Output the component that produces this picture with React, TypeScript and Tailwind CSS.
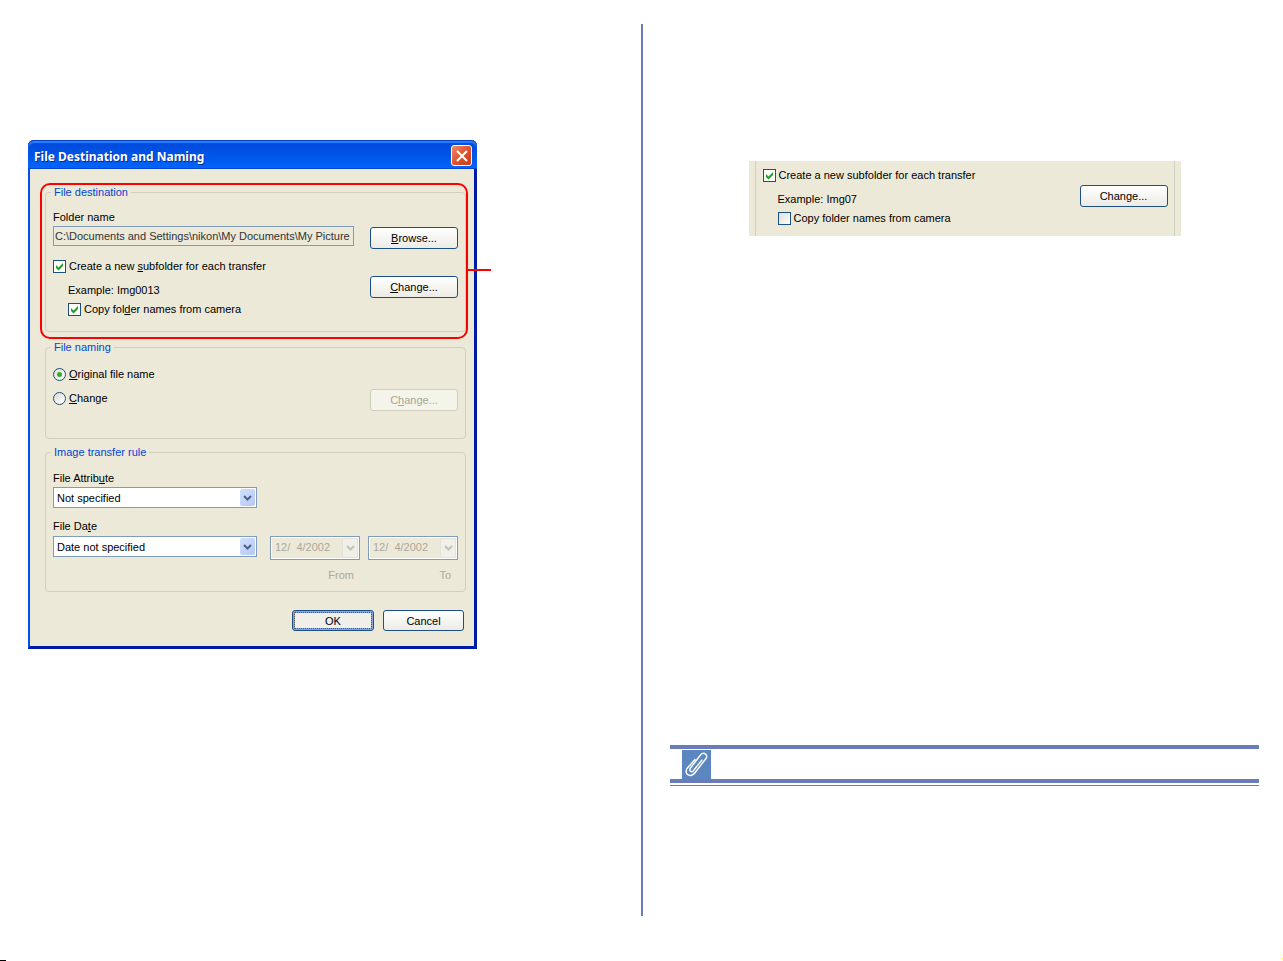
import React from "react";

const uiFont = "font-['Liberation_Sans',Arial,sans-serif]";

function CheckMark() {
  return (
    <svg viewBox="0 0 13 13" className="pointer-events-none absolute inset-0 size-[13px]" aria-hidden="true">
      <path d="M3 5v3l2.500 2.500L10 6V3L5.500 7.500Z" fill="#21a121" />
    </svg>
  );
}

function Check({ checked = false, children }: { checked?: boolean; children: React.ReactNode }) {
  return (
    <label className="flex h-4 items-center gap-[3px]">
      <span className="relative size-[13px] shrink-0">
        <input
          type="checkbox"
          defaultChecked={checked}
          className="peer block size-[13px] appearance-none border border-[#1c5180] bg-linear-to-br from-[#dcdcd7] to-white checked:bg-none checked:bg-white"
        />
        <span className="hidden peer-checked:block">
          <CheckMark />
        </span>
      </span>
      <span>{children}</span>
    </label>
  );
}

function Radio({ checked = false, children }: { checked?: boolean; children: React.ReactNode }) {
  return (
    <label className="flex h-4 items-center gap-[3px]">
      <span className="relative size-[13px] shrink-0">
        <input
          type="radio"
          name="file-naming"
          defaultChecked={checked}
          className="peer block size-[13px] appearance-none rounded-full border border-[#1c5180] bg-linear-to-br from-[#dcdcd7] to-white"
        />
        <span className="pointer-events-none absolute inset-1 hidden rounded-full bg-[#2eb02e] peer-checked:block" />
      </span>
      <span>{children}</span>
    </label>
  );
}

function PushButton({ children, disabled = false }: { children: React.ReactNode; disabled?: boolean }) {
  return (
    <button
      type="button"
      disabled={disabled}
      className="h-[22px] w-[88px] shrink-0 rounded-[3px] border border-[#1c4f85] bg-linear-to-b from-white to-[#ecebe5] leading-5 disabled:border-[#cfccbb] disabled:bg-none disabled:bg-[#f5f4ea] disabled:text-[#a8a697]"
    >
      {children}
    </button>
  );
}

function Group({ title, className = "", children }: { title: string; className?: string; children: React.ReactNode }) {
  return (
    <fieldset className={`relative min-w-0 rounded border border-[#d0d0bf] px-[7px] ${className}`}>
      <legend className="-ml-0.5 h-4 px-[3px] leading-4 text-[#0046d5]">{title}</legend>
      {children}
    </fieldset>
  );
}

function Chevron({ color }: { color: string }) {
  return (
    <svg viewBox="0 0 9 6" className="h-[6px] w-[9px]" aria-hidden="true">
      <path d="M1 1l3.500 3.500L8 1" fill="none" stroke={color} strokeWidth="2" />
    </svg>
  );
}

function Dropdown({ id, value }: { id: string; value: string }) {
  return (
    <div className="relative h-[21px]">
      <select id={id} className="block h-full w-full appearance-none border border-[#7f9db9] bg-white pl-[3px] leading-4">
        <option>{value}</option>
      </select>
      <span className="pointer-events-none absolute inset-y-0.5 right-0.5 flex w-[15px] items-center justify-center rounded-xs bg-linear-to-br from-[#d3e0fd] to-[#b4c8f6]">
        <Chevron color="#4d6185" />
      </span>
    </div>
  );
}

function DateField({ id, label, className = "" }: { id: string; label: string; className?: string }) {
  return (
    <div className="flex w-[90px] flex-col">
      <div className="relative h-6">
        <select
          id={id}
          disabled
          className="block h-full w-full appearance-none border border-[#7f9db9] bg-[#ece9d8] pb-0.5 pl-1 leading-4 whitespace-pre text-[#aca899] opacity-100 shadow-[inset_0_0_0_1px_#ffffff]"
        >
          <option>{"12/\u00a0 4/2002"}</option>
        </select>
        <span className="pointer-events-none absolute inset-y-0.5 right-0.5 flex w-4 items-center justify-center rounded-xs border border-[#e4e2da] bg-[#f0efe8]">
          <Chevron color="#c4c2b6" />
        </span>
      </div>
      <label htmlFor={id} className={`mt-[7px] h-4 text-right leading-4 text-[#aca899] ${className}`}>
        {label}
      </label>
    </div>
  );
}

function Dialog() {
  return (
    <section
      aria-label="File Destination and Naming"
      className={`w-[449px] rounded-t-md border-r-[3px] border-b-[3px] border-l-2 border-r-[#0019a8] border-b-[#0019a8] border-l-[#0050ee] bg-[#ece9d8] text-[11px] leading-4 ${uiFont}`}
    >
      <header className="-mr-[3px] -ml-0.5 flex h-[29px] items-center justify-between rounded-t-md bg-linear-to-b from-[#0048d8] via-[#0054e6] to-[#0066ff] pr-[5px] pl-1.5 shadow-[inset_0_1px_0_#0a3ec0,inset_0_3px_1px_#2a80ff,inset_0_-1px_0_#0046d0]">
        <h1 className="pt-1 font-['Noto_Sans',sans-serif] text-[12px] font-bold text-white [text-shadow:1px_1px_0_#0a2a8a]">
          File Destination and Naming
        </h1>
        <button
          type="button"
          aria-label="Close"
          className="mt-0.5 flex size-[21px] items-center justify-center rounded-[3px] border border-white bg-linear-to-br from-[#ee8a6c] via-[#e0532c] to-[#c83c14]"
        >
          <svg viewBox="0 0 12 12" className="size-3" aria-hidden="true">
            <path d="M1 1l10 10M11 1L1 11" stroke="#fff" strokeWidth="2" />
          </svg>
        </button>
      </header>

      <div className="pt-[15px] pr-2 pb-[15px] pl-[15px]">
        <Group title="File destination" className="h-[148px]">
          <div className="flex gap-4 pt-[9px]">
            <div className="flex min-w-0 flex-1 flex-col">
              <label htmlFor="folder">Folder name</label>
              <input
                id="folder"
                readOnly
                defaultValue={"C:\\Documents and Settings\\nikon\\My Documents\\My Picture"}
                className="mt-px h-5 w-full border border-[#7f9db9] bg-transparent pl-px text-[#333]"
              />
              <div className="mt-3">
                <Check checked>
                  Create a new <u>s</u>ubfolder for each transfer
                </Check>
              </div>
              <div className="mt-2 flex flex-col gap-[3px] pl-[15px]">
                <p>Example: Img0013</p>
                <Check checked>
                  Copy fol<u>d</u>er names from camera
                </Check>
              </div>
            </div>
            <div className="flex flex-col gap-[27px] pt-[18px]">
              <PushButton>
                <u>B</u>rowse...
              </PushButton>
              <PushButton>
                <u>C</u>hange...
              </PushButton>
            </div>
          </div>
          <span className="pointer-events-none absolute -top-[17px] -right-[3px] -bottom-2 -left-1.5 rounded-[10px] border-2 border-[#ff0000]" />
          <span className="pointer-events-none absolute top-[69px] left-full ml-[3px] h-0.5 w-[23px] bg-[#ff0000]" />
        </Group>

        <Group title="File naming" className="mt-[7px] h-[100px]">
          <div className="flex items-end justify-between pt-[11px]">
            <div className="flex flex-col gap-2 pb-[5px]">
              <Radio checked>
                <u>O</u>riginal file name
              </Radio>
              <Radio>
                <u>C</u>hange
              </Radio>
            </div>
            <PushButton disabled>
              C<u>h</u>ange...
            </PushButton>
          </div>
        </Group>

        <Group title="Image transfer rule" className="mt-[5px] h-[148px]">
          <div className="flex w-[204px] flex-col pt-[10px]">
            <label htmlFor="attribute" className="mb-px">
              File Attrib<u>u</u>te
            </label>
            <Dropdown id="attribute" value="Not specified" />
          </div>
          <div className="mt-[10px] flex items-start">
            <div className="w-[204px]">
              <label htmlFor="date" className="mb-[2px] block">
                File Da<u>t</u>e
              </label>
              <Dropdown id="date" value="Date not specified" />
            </div>
            <div className="flex gap-2 pt-[18px] pl-[13px]">
              <DateField id="from" label="From" className="pr-1.5" />
              <DateField id="to" label="To" className="pr-[7px]" />
            </div>
          </div>
        </Group>

        <footer className="mt-[18px] flex justify-end gap-[9px] pr-0.5">
          <button
            type="button"
            className="h-[21px] w-[82px] rounded-[3px] border border-[#1c4f85] bg-[#f0efea] leading-4 shadow-[inset_0_0_0_2px_#8aa6d8] outline-1 -outline-offset-3 outline-[#555] outline-dotted"
          >
            OK
          </button>
          <button
            type="button"
            className="h-[21px] w-[81px] rounded-[3px] border border-[#1c4f85] bg-linear-to-b from-white to-[#ecebe5] leading-4"
          >
            Cancel
          </button>
        </footer>
      </div>
    </section>
  );
}

function SubfolderDetail() {
  return (
    <section className={`w-[432px] bg-[#ece9d8] px-1.5 text-[11px] leading-4 ${uiFont}`}>
      <div className="flex h-[75px] items-start justify-between border-x border-[#d0d0bf] pr-[6px] pl-[7px]">
        <div className="pt-1.5">
          <Check checked>Create a new subfolder for each transfer</Check>
          <div className="mt-2 flex flex-col gap-[3px] pl-[15px]">
            <p>Example: Img07</p>
            <Check>Copy folder names from camera</Check>
          </div>
        </div>
        <div className="pt-6">
          <PushButton>Change...</PushButton>
        </div>
      </div>
    </section>
  );
}

function NoteBanner() {
  return (
    <div className="border-b border-[#6a7bba] pb-0.5">
      <div className="border-y-4 border-[#6a7bba] pt-px pl-3">
        <svg viewBox="0 0 29 29" className="block size-[29px] bg-[#5b86c0]" aria-hidden="true">
          <path
            d="M20 10L11.500 20.500C9.500 23 6.500 21 8.500 18L18.500 5C21.500 1.500 26.500 4.500 24 8.500L13.500 22C9 28.500 1.500 24.500 5 18.500L13 9.500"
            fill="none"
            stroke="#fff"
            strokeWidth="1.400"
            strokeLinecap="round"
          />
        </svg>
      </div>
    </div>
  );
}

export default function App() {
  return (
    <main className="relative flex min-h-screen bg-white pt-6 pb-[45px] text-black">
      <div className="w-1/2 shrink-0 pt-[116px] pl-7">
        <Dialog />
      </div>
      <div className="-ml-px w-0.5 shrink-0 bg-[#6a7bba]" />
      <div className="flex min-w-0 flex-1 flex-col justify-between pr-6 pb-[130px] pl-[27px]">
        <div className="pt-[137px] pl-[79px]">
          <SubfolderDetail />
        </div>
        <NoteBanner />
      </div>
      <span className="absolute bottom-0 left-0 h-px w-1.5 bg-black" />
      <span className="absolute right-0 bottom-0.5 size-px bg-[#ffff00]" />
    </main>
  );
}
